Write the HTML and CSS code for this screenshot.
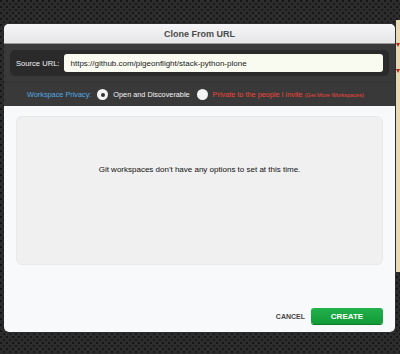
FILE: index.html
```html
<!DOCTYPE html>
<html lang="en">
<head>
    <meta charset="UTF-8">
    <title>Clone From URL</title>
    <link rel="stylesheet" href="styles.css">
</head>
<body>
    <div class="backdrop">
        <div class="side-panel">
            <span class="marker"></span>
            <span class="marker"></span>
        </div>
    </div>
    <div class="modal">
        <div class="modal-header">Clone From URL</div>
        <div class="modal-top">
            <div class="source-box">
                <label for="sourceUrl">Source URL:</label>
                <input type="text" id="sourceUrl" value="https://github.com/pigeonflight/stack-python-plone">
            </div>
            <div class="privacy-row">
                <span class="privacy-label">Workspace Privacy:</span>
                <span class="radio checked"></span>
                <span class="option-open">Open and Discoverable</span>
                <span class="radio"></span>
                <span class="option-private">Private to the people I invite <small>(Get More Workspaces)</small></span>
            </div>
        </div>
        <div class="modal-body">
            <div class="options-box">Git workspaces don't have any options to set at this time.</div>
        </div>
        <div class="modal-footer">
            <span class="cancel">CANCEL</span>
            <button class="btn-create">CREATE</button>
        </div>
    </div>
</body>
</html>
```

FILE: styles.css
```css
body {
    margin: 0;
    height: 354px;
    overflow: hidden;
    font-family: 'Liberation Sans', Arial, sans-serif;
    background-color: #2c2c2c;
    background-image:
        radial-gradient(circle at 1px 1px, #161616 1px, transparent 1.2px),
        radial-gradient(circle at 4px 4px, #1a1a1a 1px, transparent 1.2px);
    background-size: 6px 6px;
    position: relative;
}
.backdrop {
    display: flex;
    justify-content: flex-end;
    padding-top: 20px;
}
.side-panel {
    width: 4px;
    height: 252px;
    background: #e9dab6;
    display: flex;
    flex-direction: column;
    gap: 22px;
    padding-top: 23px;
    box-sizing: border-box;
}
.marker {
    width: 0;
    height: 0;
    border-left: 2px solid transparent;
    border-right: 2px solid transparent;
    border-top: 4px solid #b02a1a;
}
.modal {
    position: absolute;
    left: 4px;
    top: 24px;
    width: 391px;
    height: 308px;
    background: #f8f9fb;
    border-radius: 5px;
    overflow: hidden;
    display: flex;
    flex-direction: column;
}
.modal-header {
    height: 19px;
    line-height: 20px;
    text-align: center;
    font-size: 9px;
    font-weight: bold;
    color: #4a4a4a;
    background: linear-gradient(#f6f6f8, #e6e6e9);
    border-bottom: 1px solid #9a9a9a;
}
.modal-top {
    background: #393939;
    padding: 6px 6px 0;
}
.source-box {
    display: flex;
    align-items: center;
    background: #2a2a2a;
    border-radius: 5px;
    height: 26px;
    padding: 0 6px;
    gap: 5px;
}
.source-box label {
    color: #f2f2f2;
    font-size: 7.6px;
}
.source-box input {
    flex: 1;
    height: 18px;
    border: none;
    border-radius: 3px;
    background: #f9faf0;
    font-family: inherit;
    font-size: 8px;
    color: #222;
    padding: 0 6px;
    box-sizing: border-box;
    outline: none;
}
.privacy-row {
    display: flex;
    align-items: center;
    height: 23px;
    margin: 6px -6px 0;
    padding-left: 23px;
    border-top: 1px solid #333;
    font-size: 7.3px;
}
.privacy-label {
    color: #52a9e6;
    margin-right: 6px;
}
.radio {
    width: 11px;
    height: 11px;
    border-radius: 50%;
    background: #f4f4f4;
    margin-right: 5px;
    display: flex;
    align-items: center;
    justify-content: center;
}
.radio.checked::after {
    content: "";
    width: 4px;
    height: 4px;
    border-radius: 50%;
    background: #333;
}
.option-open {
    color: #f4f4f4;
    margin-right: 7px;
}
.option-private {
    color: #f0453a;
}
.option-private small {
    font-size: 5.6px;
}
.modal-body {
    padding: 10px 12px 0;
}
.options-box {
    height: 149px;
    background: #f0f0f0;
    border: 1px solid #e9e9e9;
    border-radius: 6px;
    box-sizing: border-box;
    padding-top: 48px;
    text-align: center;
    font-size: 8px;
    color: #111;
}
.modal-footer {
    margin-top: auto;
    display: flex;
    justify-content: flex-end;
    align-items: center;
    gap: 6px;
    padding: 0 12px 8px;
}
.cancel {
    font-size: 7px;
    font-weight: bold;
    color: #444;
}
.btn-create {
    width: 72px;
    height: 16px;
    border: none;
    border-radius: 3px;
    background: linear-gradient(#22b14c, #129a36);
    color: #fff;
    font-family: inherit;
    font-size: 8px;
    font-weight: bold;
    padding: 0;
    box-shadow: 0 1px 0 #0c7a28;
}
```
